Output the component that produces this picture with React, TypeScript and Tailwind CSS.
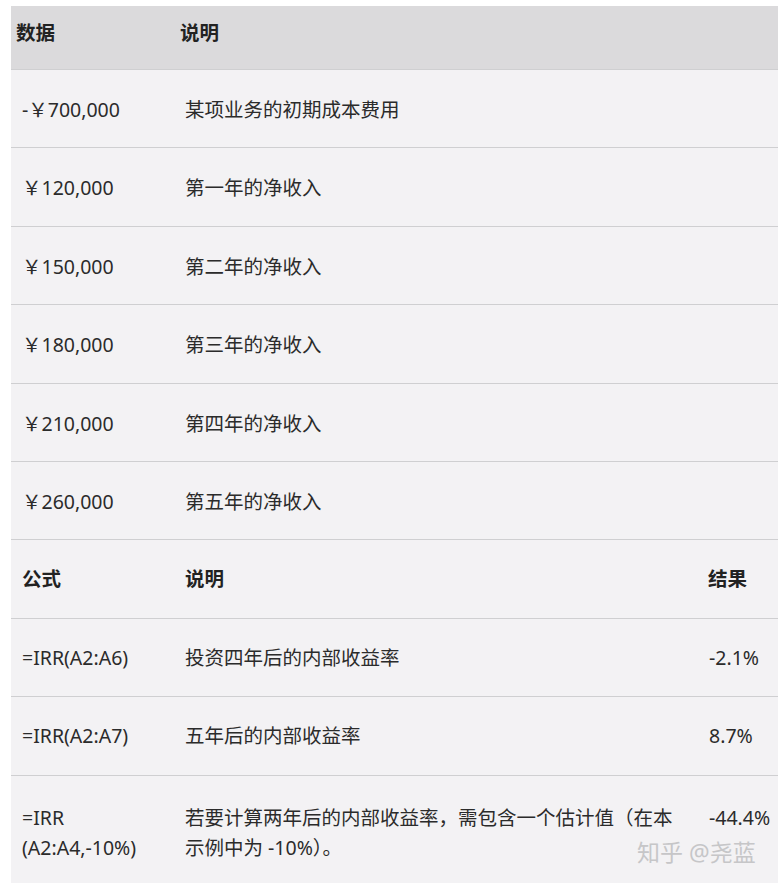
const font = { fontFamily: '"Noto Sans", "Noto Sans CJK SC", sans-serif' };

const dataRows = [
  ["-￥700,000", "某项业务的初期成本费用"],
  ["￥120,000", "第一年的净收入"],
  ["￥150,000", "第二年的净收入"],
  ["￥180,000", "第三年的净收入"],
  ["￥210,000", "第四年的净收入"],
  ["￥260,000", "第五年的净收入"],
];

const formulaRows = [
  ["=IRR(A2:A6)", "投资四年后的内部收益率", "-2.1%"],
  ["=IRR(A2:A7)", "五年后的内部收益率", "8.7%"],
];

export default function App() {
  return (
    <div className="min-h-[883px] bg-white pt-[6px] pl-[11px] text-[#2b2b2b] text-[19.5px]" style={font}>
      <div className="bg-[#f3f2f4]">
        <div className="flex h-[63px] items-center bg-[#dbdadc] pb-[9px] font-bold text-[#222]">
          <div className="w-[169px] pl-[5px]">数据</div>
          <div>说明</div>
        </div>

        {dataRows.map(([amount, desc]) => (
          <div key={amount} className="flex h-[78.4px] items-center border-t border-[#cfcfd1] pt-[2px]">
            <div className="w-[174px] pl-[11px]">{amount}</div>
            <div>{desc}</div>
          </div>
        ))}

        <div className="flex h-[78.4px] items-center border-t border-[#cfcfd1] font-bold text-[#222]">
          <div className="w-[174px] pl-[11px]">公式</div>
          <div className="w-[523px]">说明</div>
          <div>结果</div>
        </div>

        {formulaRows.map(([formula, desc, result]) => (
          <div key={formula} className="flex h-[78.4px] items-center border-t border-[#cfcfd1]">
            <div className="w-[174px] pl-[11px]">{formula}</div>
            <div className="w-[524px]">{desc}</div>
            <div>{result}</div>
          </div>
        ))}

        <div className="relative flex h-[112px] items-start border-t border-[#cfcfd1] pt-[27px] leading-[30px]">
          <div className="w-[174px] pl-[11px]">
            =IRR
            <br />
            (A2:A4,-10%)
          </div>
          <div className="w-[524px]">
            若要计算两年后的内部收益率，需包含一个估计值（在本
            <br />
            示例中为 -10%）。
          </div>
          <div>-44.4%</div>
          <div className="absolute left-[626px] top-[63px] text-[23px] leading-[26px] text-[#c6c6c8]">
            知乎 @尧蓝
          </div>
        </div>
      </div>
    </div>
  );
}
